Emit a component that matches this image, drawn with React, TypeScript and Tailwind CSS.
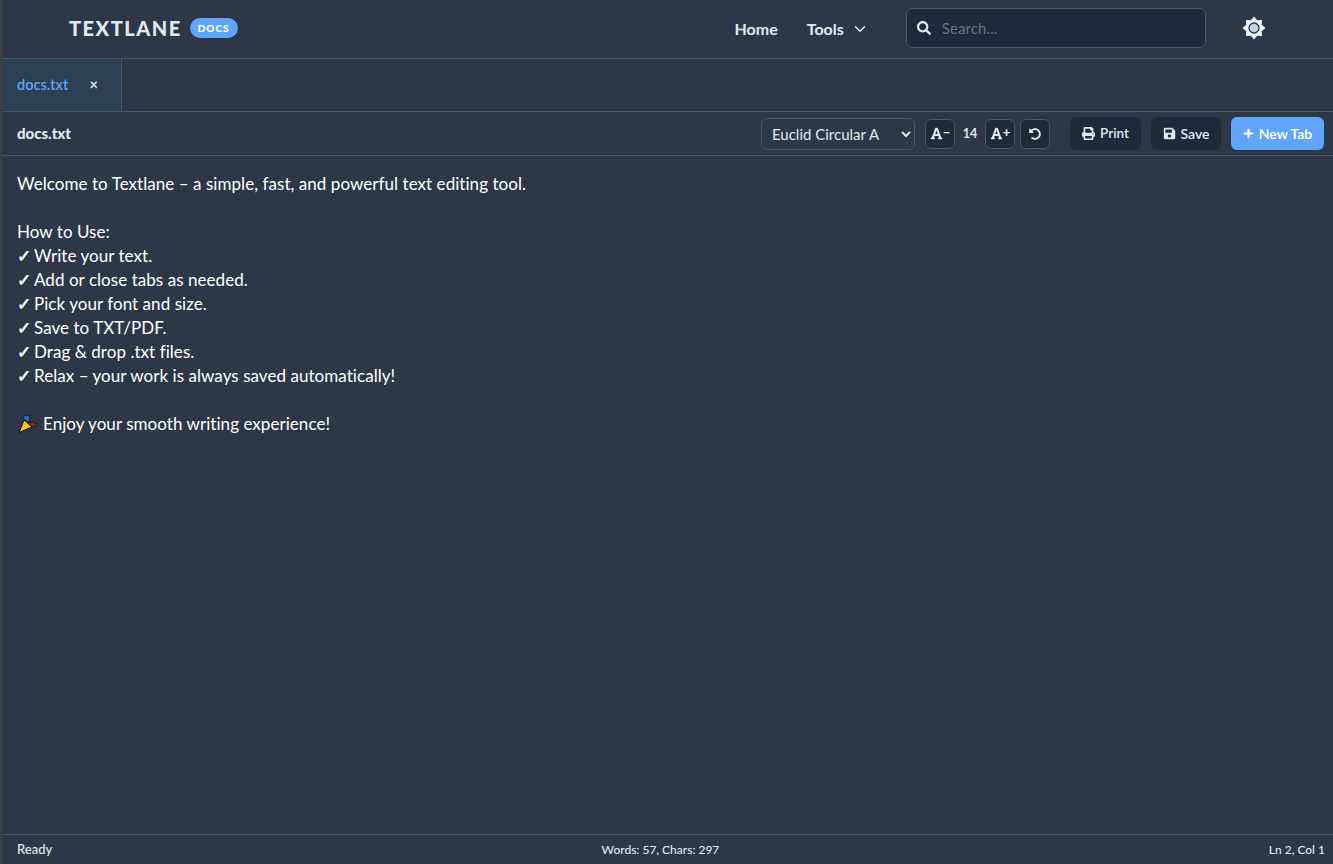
import React from "react";
import { FaSearch, FaPrint, FaSave, FaPlus, FaUndoAlt, FaFont } from "react-icons/fa";
import { ChevronDown } from "lucide-react";

const intro = [
  "Welcome to Textlane – a simple, fast, and powerful text editing tool.",
  "",
  "How to Use:",
];

const steps = [
  "Write your text.",
  "Add or close tabs as needed.",
  "Pick your font and size.",
  "Save to TXT/PDF.",
  "Drag & drop .txt files.",
  "Relax – your work is always saved automatically!",
];

const PartyPopper = () => (
  <svg width="20" height="20" viewBox="0 0 20 20" className="shrink-0">
    <path d="M7 6 L15 13 L2 18.5 Z" fill="#f7c13c" stroke="#111" strokeWidth="1" />
    <path d="M11 9 L16 8 L20 10 L18 13 L14 12 Z" fill="#8b2a22" stroke="#111" strokeWidth="0.8" />
    <path d="M7 1 L10 2 L13 1 L12 5 L13 8 L9 7 L7 5 Z" fill="#1f7fb8" stroke="#111" strokeWidth="0.7" />
  </svg>
);

const SunIcon = () => (
  <svg width="24" height="24" viewBox="0 0 24 24" className="ml-[36px] -translate-y-[1px] shrink-0">
    <path
      d="M12 0.5 L15.2 4.3 L20.1 3.9 L19.7 8.8 L23.5 12 L19.7 15.2 L20.1 20.1 L15.2 19.7 L12 23.5 L8.8 19.7 L3.9 20.1 L4.3 15.2 L0.5 12 L4.3 8.8 L3.9 3.9 L8.8 4.3 Z"
      fill="#edf2f7"
    />
    <circle cx="12" cy="12" r="5" fill="#c6d2e2" stroke="#2d3748" strokeWidth="1.3" />
  </svg>
);

export default function App() {
  return (
    <div className="flex h-screen flex-col border-l-2 border-[#3f3f3f] bg-[#2d3748] font-['Lato',sans-serif] text-[#e2e8f0]">
      <header className="flex h-[59px] shrink-0 items-center border-b border-[#4a5568] pl-[67px]">
        <span className="-translate-y-[1px] text-[20px] font-black tracking-[1.5px]">TEXTLANE</span>
        <span className="ml-[8px] -translate-y-[1px] rounded-full bg-[#60a5fa] px-[8px] py-[3px] text-[10px] leading-[14px] font-black tracking-[1px] text-white">DOCS</span>
        <nav className="ml-[497px] flex items-center text-[16px] font-bold">
          <span>Home</span>
          <span className="ml-[29px]">Tools</span>
          <ChevronDown size={18} className="ml-[7px]" />
        </nav>
        <div className="ml-[37px] flex h-10 w-[300px] -translate-y-[1px] items-center rounded-md border border-[#4a5568] bg-[#1e293b] pl-[10px]">
          <FaSearch size={14} />
          <span className="ml-[11px] text-[15px] tracking-[0.1px] text-[#6b7280]">Search...</span>
        </div>
        <SunIcon />
      </header>

      <div className="flex h-[53px] shrink-0 border-b border-[#4a5568]">
        <div className="flex w-[120px] items-center justify-between border-r border-[#4a5568] bg-[#2d3f52] pr-[23px] pl-[15px] text-[14.5px]">
          <span className="font-semibold text-[#60a5fa]">docs.txt</span>
          <span className="font-bold">×</span>
        </div>
      </div>

      <div className="flex h-11 shrink-0 items-center border-b border-[#4a5568] pr-[9px] pl-[15px]">
        <span className="text-[15px] font-black">docs.txt</span>
        <select className="ml-auto h-8 w-[154px] rounded-md border border-[#4a5568] bg-[#2d3748] pl-[6px] text-[15px]">
          <option>Euclid Circular A</option>
        </select>
        <button className="ml-[10px] flex size-[30px] items-center justify-center rounded-md border border-[#4a5568] bg-[#1e293b]">
          <FaFont size={13} />
          <span className="-translate-y-[1px] text-[13px] leading-none font-black">−</span>
        </button>
        <span className="w-[30px] translate-y-[1px] text-center text-[12.5px] font-bold">14</span>
        <button className="flex size-[30px] items-center justify-center rounded-md border border-[#4a5568] bg-[#1e293b]">
          <FaFont size={13} />
          <span className="-translate-y-[1px] text-[13px] leading-none font-black">+</span>
        </button>
        <button className="ml-[5px] flex size-[30px] items-center justify-center rounded-md border border-[#4a5568] bg-[#1e293b]">
          <FaUndoAlt size={12} />
        </button>
        <button className="ml-5 flex h-[33px] w-[71px] items-center justify-center gap-[5px] rounded-md bg-[#1e293b] text-[13.5px] font-semibold">
          <FaPrint size={13} /> Print
        </button>
        <button className="ml-[10px] flex h-[33px] w-[70px] items-center justify-center gap-[5px] rounded-md bg-[#1e293b] text-[14px] font-semibold">
          <FaSave size={13} /> Save
        </button>
        <button className="ml-[10px] flex h-[33px] w-[93px] items-center justify-center gap-[5px] rounded-md bg-[#60a5fa] text-[14px] font-semibold text-white">
          <FaPlus size={11} /> New Tab
        </button>
      </div>

      <main className="flex-1 overflow-hidden pt-4 pl-[15px] text-[17px] leading-6 tracking-[0.05px] text-white">
        {intro.map((line, i) => (
          <div key={i} className="h-6 whitespace-pre">{line}</div>
        ))}
        {steps.map((step) => (
          <div key={step} className="flex h-6 items-center">
            <span className="w-[17px] shrink-0 font-bold">✓</span>
            <span>{step}</span>
          </div>
        ))}
        <div className="h-6" />
        <div className="flex h-6 items-center gap-[6px]">
          <PartyPopper />
          <span>Enjoy your smooth writing experience!</span>
        </div>
      </main>

      <footer className="flex h-[30px] shrink-0 items-center justify-between border-t border-[#4a5568] pr-[8px] pl-[15px] text-[12px] font-medium">
        <span className="text-[13px]">Ready</span>
        <span>Words: 57, Chars: 297</span>
        <span>Ln 2, Col 1</span>
      </footer>
    </div>
  );
}
